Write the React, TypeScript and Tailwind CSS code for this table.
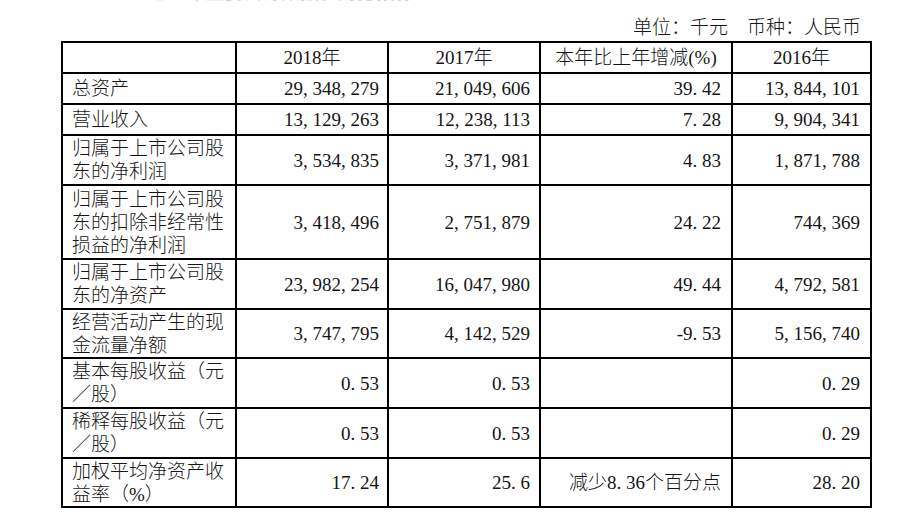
import React from 'react'

type Row = {
  label: string[]
  vals: string[]
  h: string
}

const rows: Row[] = [
  { label: ['总资产'], vals: ['29,348,279', '21,049,606', '39.42', '13,844,101'], h: 'h-[31px]' },
  { label: ['营业收入'], vals: ['13,129,263', '12,238,113', '7.28', '9,904,341'], h: 'h-[31px]' },
  {
    label: ['归属于上市公司股', '东的净利润'],
    vals: ['3,534,835', '3,371,981', '4.83', '1,871,788'],
    h: 'h-[50px]',
  },
  {
    label: ['归属于上市公司股', '东的扣除非经常性', '损益的净利润'],
    vals: ['3,418,496', '2,751,879', '24.22', '744,369'],
    h: 'h-[74px]',
  },
  {
    label: ['归属于上市公司股', '东的净资产'],
    vals: ['23,982,254', '16,047,980', '49.44', '4,792,581'],
    h: 'h-[50px]',
  },
  {
    label: ['经营活动产生的现', '金流量净额'],
    vals: ['3,747,795', '4,142,529', '-9.53', '5,156,740'],
    h: 'h-[49px]',
  },
  { label: ['基本每股收益（元', '／股）'], vals: ['0.53', '0.53', '', '0.29'], h: 'h-[50px]' },
  { label: ['稀释每股收益（元', '／股）'], vals: ['0.53', '0.53', '', '0.29'], h: 'h-[50px]' },
  {
    label: ['加权平均净资产收', '益率（%）'],
    vals: ['17.24', '25.6', '减少8.36个百分点', '28.20'],
    h: 'h-[49px]',
  },
]

// separators in the source pdf take a full half-width cell, so pad them out
const Num = ({ v }: { v: string }) => (
  <>
    {v.split(/([,.])/).map((p, i) =>
      p === ',' || p === '.' ? (
        <span key={i} className="mr-[4.75px]">
          {p}
        </span>
      ) : (
        <React.Fragment key={i}>{p}</React.Fragment>
      )
    )}
  </>
)

const valPad = ['pr-[8px]', 'pr-[9px]', 'pr-[10px]', 'pr-[10px]']

export default function App() {
  return (
    <div
      className="w-[916px] h-[525px] overflow-hidden bg-white text-[#151515] font-light"
      style={{ fontFamily: '"Liberation Serif", "Noto Sans CJK SC", serif' }}
    >
      <div className="ml-[61px] w-[811px]">
        <div className="-mt-[18px] h-[22px] pl-[49px] text-[19px] leading-[22px] font-bold text-[#c9ccd6] whitespace-nowrap">
          二、近三年主要会计数据和财务指标
        </div>
        <div className="h-[37px] pt-[12px] pr-[11px] text-right text-[19px] leading-[23px]">
          单位：千元　币种：人民币
        </div>
        <table className="w-[811px] table-fixed border-collapse text-[19px] leading-[23px]">
          <colgroup>
            <col className="w-[174px]" />
            <col className="w-[152px]" />
            <col className="w-[152px]" />
            <col className="w-[192px]" />
            <col className="w-[139px]" />
          </colgroup>
          <thead>
            <tr className="h-[31px]">
              <th className="border-2 border-black font-light"></th>
              <th className="border-2 border-black font-light text-center">2018年</th>
              <th className="border-2 border-black font-light text-center">2017年</th>
              <th className="border-2 border-black font-light text-center">本年比上年增减(%)</th>
              <th className="border-2 border-black font-light text-center">2016年</th>
            </tr>
          </thead>
          <tbody>
            {rows.map((r, i) => (
              <tr key={i} className={r.h}>
                <td className="border-2 border-black pl-[9px] align-middle">
                  {r.label.map((l, j) => (
                    <div key={j} className="whitespace-nowrap">
                      {l}
                    </div>
                  ))}
                </td>
                {r.vals.map((v, j) => (
                  <td
                    key={j}
                    className={`border-2 border-black text-right align-middle whitespace-nowrap ${valPad[j]}`}
                  >
                    <Num v={v} />
                  </td>
                ))}
              </tr>
            ))}
          </tbody>
        </table>
      </div>
    </div>
  )
}
